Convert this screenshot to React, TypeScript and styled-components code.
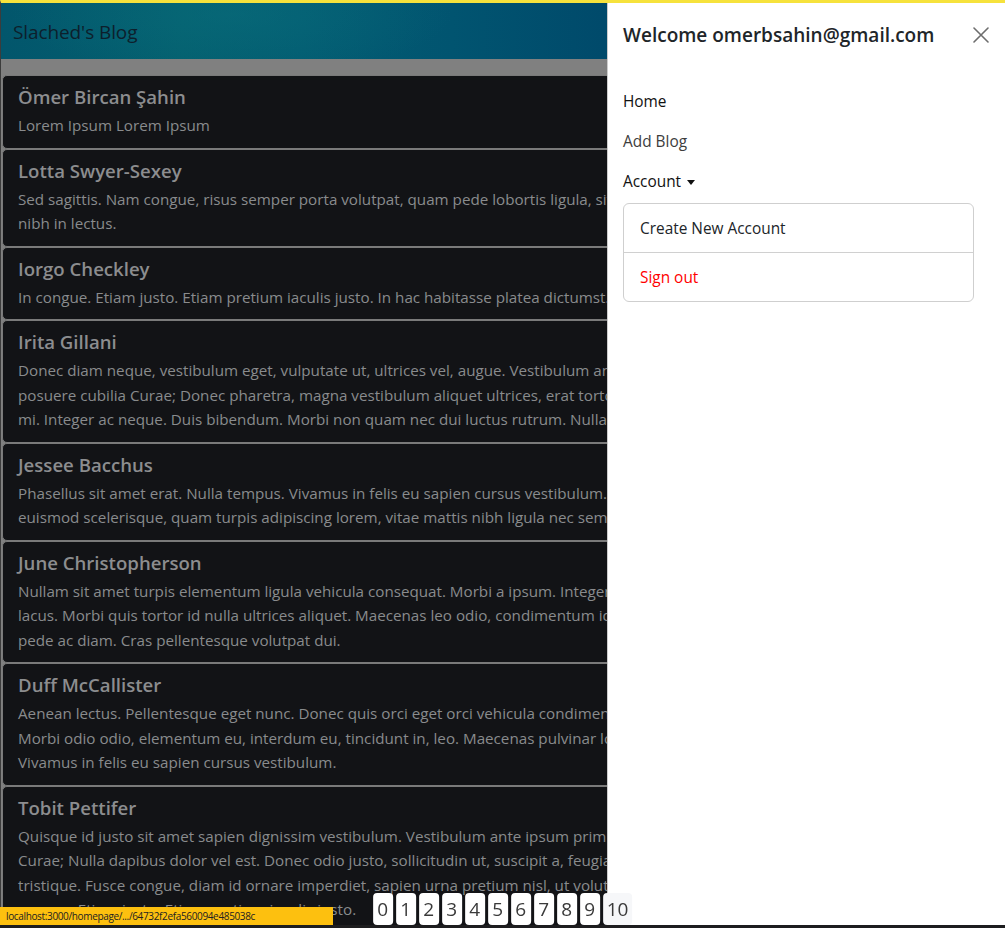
import React from "react";
import styled, { createGlobalStyle } from "styled-components";

const GlobalStyle = createGlobalStyle`
  html, body { margin: 0; padding: 0; }
  body {
    background: #808080;
    font-family: "Open Sans", "Noto Sans", sans-serif;
    overflow: hidden;
    height: 928px;
  }
  * { box-sizing: border-box; }
`;

const Page = styled.div`
  border-top: 3px solid #f6e23c;
  border-left: 1px solid #3c3c3c;
  min-height: 928px;
  background: #808080;
`;

const Header = styled.header`
  height: 56px;
  display: flex;
  align-items: center;
  padding-left: 12px;
  background:
    radial-gradient(ellipse 22% 110% at 23% 20%, rgba(10, 112, 126, 0.45) 0%, rgba(10, 112, 126, 0) 100%),
    linear-gradient(90deg, #02566c 0%, #04606f 18%, #035d72 30%, #015470 45%, #004a6b 60%, #00466a 100%);
`;

const Brand = styled.div`
  font-size: 19px;
  color: #0d1f2c;
  letter-spacing: -0.1px;
  margin-top: 1px;
`;

const CardList = styled.main`
  padding: 16px 0 0 1px;
  display: flex;
  flex-direction: column;
`;

const Card = styled.article`
  background: #121316;
  border: 1px solid #7a7a7a;
  border-radius: 5px;
  padding: 9px 15px 10px;
  overflow: hidden;
`;

const CardTitle = styled.h5`
  margin: 0 0 4px;
  font-size: 18.6px;
  line-height: 24px;
  font-weight: 600;
  color: #8c8d8f;
`;

const CardLine = styled.span`
  display: block;
  white-space: nowrap;
  font-size: 15.2px;
  line-height: 24.5px;
  color: #898b8d;
`;

const Offcanvas = styled.aside`
  position: fixed;
  top: 3px;
  right: 0;
  bottom: 3px;
  width: 398px;
  background: #fff;
  border-left: 1px solid rgba(0, 0, 0, 0.2);
  display: flex;
  flex-direction: column;
`;

const OffHeader = styled.div`
  display: flex;
  align-items: center;
  justify-content: space-between;
  padding: 17px 15px 16px 15px;
`;

const OffTitle = styled.h5`
  margin: 0;
  font-size: 19px;
  line-height: 30px;
  font-weight: 600;
  color: #212529;
`;

const CloseButton = styled.button`
  border: 0;
  background: transparent;
  padding: 0;
  width: 18px;
  height: 18px;
  display: flex;
  align-items: center;
  justify-content: center;
  cursor: pointer;
`;

const OffBody = styled.nav`
  padding: 16px 31px 16px 15px;
  display: flex;
  flex-direction: column;
`;

const NavLink = styled.a<{ $muted?: boolean }>`
  display: flex;
  align-items: center;
  padding: 8px 0;
  font-size: 15.4px;
  line-height: 24px;
  color: ${(p) => (p.$muted ? "#3d3d3d" : "#111")};
  text-decoration: none;
`;

const Caret = styled.span`
  display: inline-block;
  margin-left: 6px;
  border-top: 5px solid #111;
  border-left: 4px solid transparent;
  border-right: 4px solid transparent;
  margin-top: 1px;
`;

const Menu = styled.div`
  margin-top: 1px;
  border: 1px solid #cfcfcf;
  border-radius: 6px;
  display: flex;
  flex-direction: column;
`;

const MenuItem = styled.a<{ $danger?: boolean }>`
  padding: 12px 16px 12px 16px;
  font-size: 15.4px;
  line-height: 24px;
  color: ${(p) => (p.$danger ? "#ff0000" : "#212529")};
  text-decoration: none;
  transform: translateY(1px);
`;

const Divider = styled.hr`
  margin: 0;
  border: 0;
  border-top: 1px solid #d0d0d0;
`;

const Pagination = styled.div`
  position: fixed;
  z-index: 5;
  bottom: 3px;
  left: 50%;
  transform: translateX(-50%);
  display: flex;
  gap: 3px;
`;

const PageButton = styled.button<{ $light?: boolean }>`
  border: 0;
  border-radius: 4px;
  height: 32px;
  padding: 0 4px;
  min-width: 20px;
  background: ${(p) => (p.$light ? "#f6f7f9" : "#fff")};
  font-family: "Open Sans", sans-serif;
  font-size: 19px;
  color: #3a3a3a;
  display: flex;
  align-items: center;
  justify-content: center;
`;

const StatusBubble = styled.div`
  position: fixed;
  z-index: 5;
  left: 0;
  bottom: 3px;
  width: 333px;
  height: 18px;
  background: #fdc00f;
  font-size: 10px;
  letter-spacing: -0.35px;
  line-height: 18px;
  padding-left: 6px;
  color: #222;
  white-space: nowrap;
  overflow: hidden;
`;

const BottomStrip = styled.div`
  position: fixed;
  z-index: 6;
  left: 0;
  right: 0;
  bottom: 0;
  height: 3px;
  background: #1d1d1f;
`;

const posts: { title: string; lines: string[] }[] = [
  { title: "Ömer Bircan Şahin", lines: ["Lorem Ipsum Lorem Ipsum"] },
  {
    title: "Lotta Swyer-Sexey",
    lines: [
      "Sed sagittis. Nam congue, risus semper porta volutpat, quam pede lobortis ligula, sit amet eleifend pede libero quis orci. Nullam molestie",
      "nibh in lectus.",
    ],
  },
  {
    title: "Iorgo Checkley",
    lines: ["In congue. Etiam justo. Etiam pretium iaculis justo. In hac habitasse platea dictumst. Etiam faucibus cursus urna. Ut tellus."],
  },
  {
    title: "Irita Gillani",
    lines: [
      "Donec diam neque, vestibulum eget, vulputate ut, ultrices vel, augue. Vestibulum ante ipsum primis in faucibus orci luctus et ultrices",
      "posuere cubilia Curae; Donec pharetra, magna vestibulum aliquet ultrices, erat tortor sollicitudin mi, sit amet lobortis sapien sapien non",
      "mi. Integer ac neque. Duis bibendum. Morbi non quam nec dui luctus rutrum. Nulla tellus.",
    ],
  },
  {
    title: "Jessee Bacchus",
    lines: [
      "Phasellus sit amet erat. Nulla tempus. Vivamus in felis eu sapien cursus vestibulum. Proin eu mi. Nulla ac enim. In tempor, turpis nec",
      "euismod scelerisque, quam turpis adipiscing lorem, vitae mattis nibh ligula nec sem.",
    ],
  },
  {
    title: "June Christopherson",
    lines: [
      "Nullam sit amet turpis elementum ligula vehicula consequat. Morbi a ipsum. Integer a nibh. In quis justo. Maecenas rhoncus aliquam",
      "lacus. Morbi quis tortor id nulla ultrices aliquet. Maecenas leo odio, condimentum id, luctus nec, molestie sed, justo. Pellentesque viverra",
      "pede ac diam. Cras pellentesque volutpat dui.",
    ],
  },
  {
    title: "Duff McCallister",
    lines: [
      "Aenean lectus. Pellentesque eget nunc. Donec quis orci eget orci vehicula condimentum. Curabitur in libero ut massa volutpat convallis.",
      "Morbi odio odio, elementum eu, interdum eu, tincidunt in, leo. Maecenas pulvinar lobortis est. Phasellus sit amet erat. Nulla tempus.",
      "Vivamus in felis eu sapien cursus vestibulum.",
    ],
  },
  {
    title: "Tobit Pettifer",
    lines: [
      "Quisque id justo sit amet sapien dignissim vestibulum. Vestibulum ante ipsum primis in faucibus orci luctus et ultrices posuere cubilia",
      "Curae; Nulla dapibus dolor vel est. Donec odio justo, sollicitudin ut, suscipit a, feugiat et, eros. Vestibulum ac est lacinia nisi venenatis",
      "tristique. Fusce congue, diam id ornare imperdiet, sapien urna pretium nisl, ut volutpat sapien arcu sed augue. Aliquam erat volutpat. In",
      "congue. Etiam justo. Etiam pretium iaculis justo.",
    ],
  },
];

const CloseIcon = () => (
  <svg width="16" height="16" viewBox="0 0 16 16">
    <path d="M1 1 L15 15 M15 1 L1 15" stroke="#6d6d6d" strokeWidth="1.6" strokeLinecap="round" />
  </svg>
);

export default function App() {
  return (
    <>
      <GlobalStyle />
      <Page>
        <Header>
          <Brand>Slached's Blog</Brand>
        </Header>
        <CardList>
          {posts.map((p) => (
            <Card key={p.title}>
              <CardTitle>{p.title}</CardTitle>
              {p.lines.map((l, i) => (
                <CardLine key={i}>{l}</CardLine>
              ))}
            </Card>
          ))}
        </CardList>
      </Page>

      <Offcanvas>
        <OffHeader>
          <OffTitle>Welcome omerbsahin@gmail.com</OffTitle>
          <CloseButton aria-label="Close">
            <CloseIcon />
          </CloseButton>
        </OffHeader>
        <OffBody>
          <NavLink href="#">Home</NavLink>
          <NavLink href="#" $muted>
            Add Blog
          </NavLink>
          <NavLink href="#">
            Account
            <Caret />
          </NavLink>
          <Menu>
            <MenuItem href="#">Create New Account</MenuItem>
            <Divider />
            <MenuItem href="#" $danger>
              Sign out
            </MenuItem>
          </Menu>
        </OffBody>
      </Offcanvas>

      <Pagination>
        {Array.from({ length: 11 }, (_, i) => (
          <PageButton key={i} $light={i === 10}>
            {i}
          </PageButton>
        ))}
      </Pagination>

      <StatusBubble>localhost:3000/homepage/.../64732f2efa560094e485038c</StatusBubble>
      <BottomStrip />
    </>
  );
}
